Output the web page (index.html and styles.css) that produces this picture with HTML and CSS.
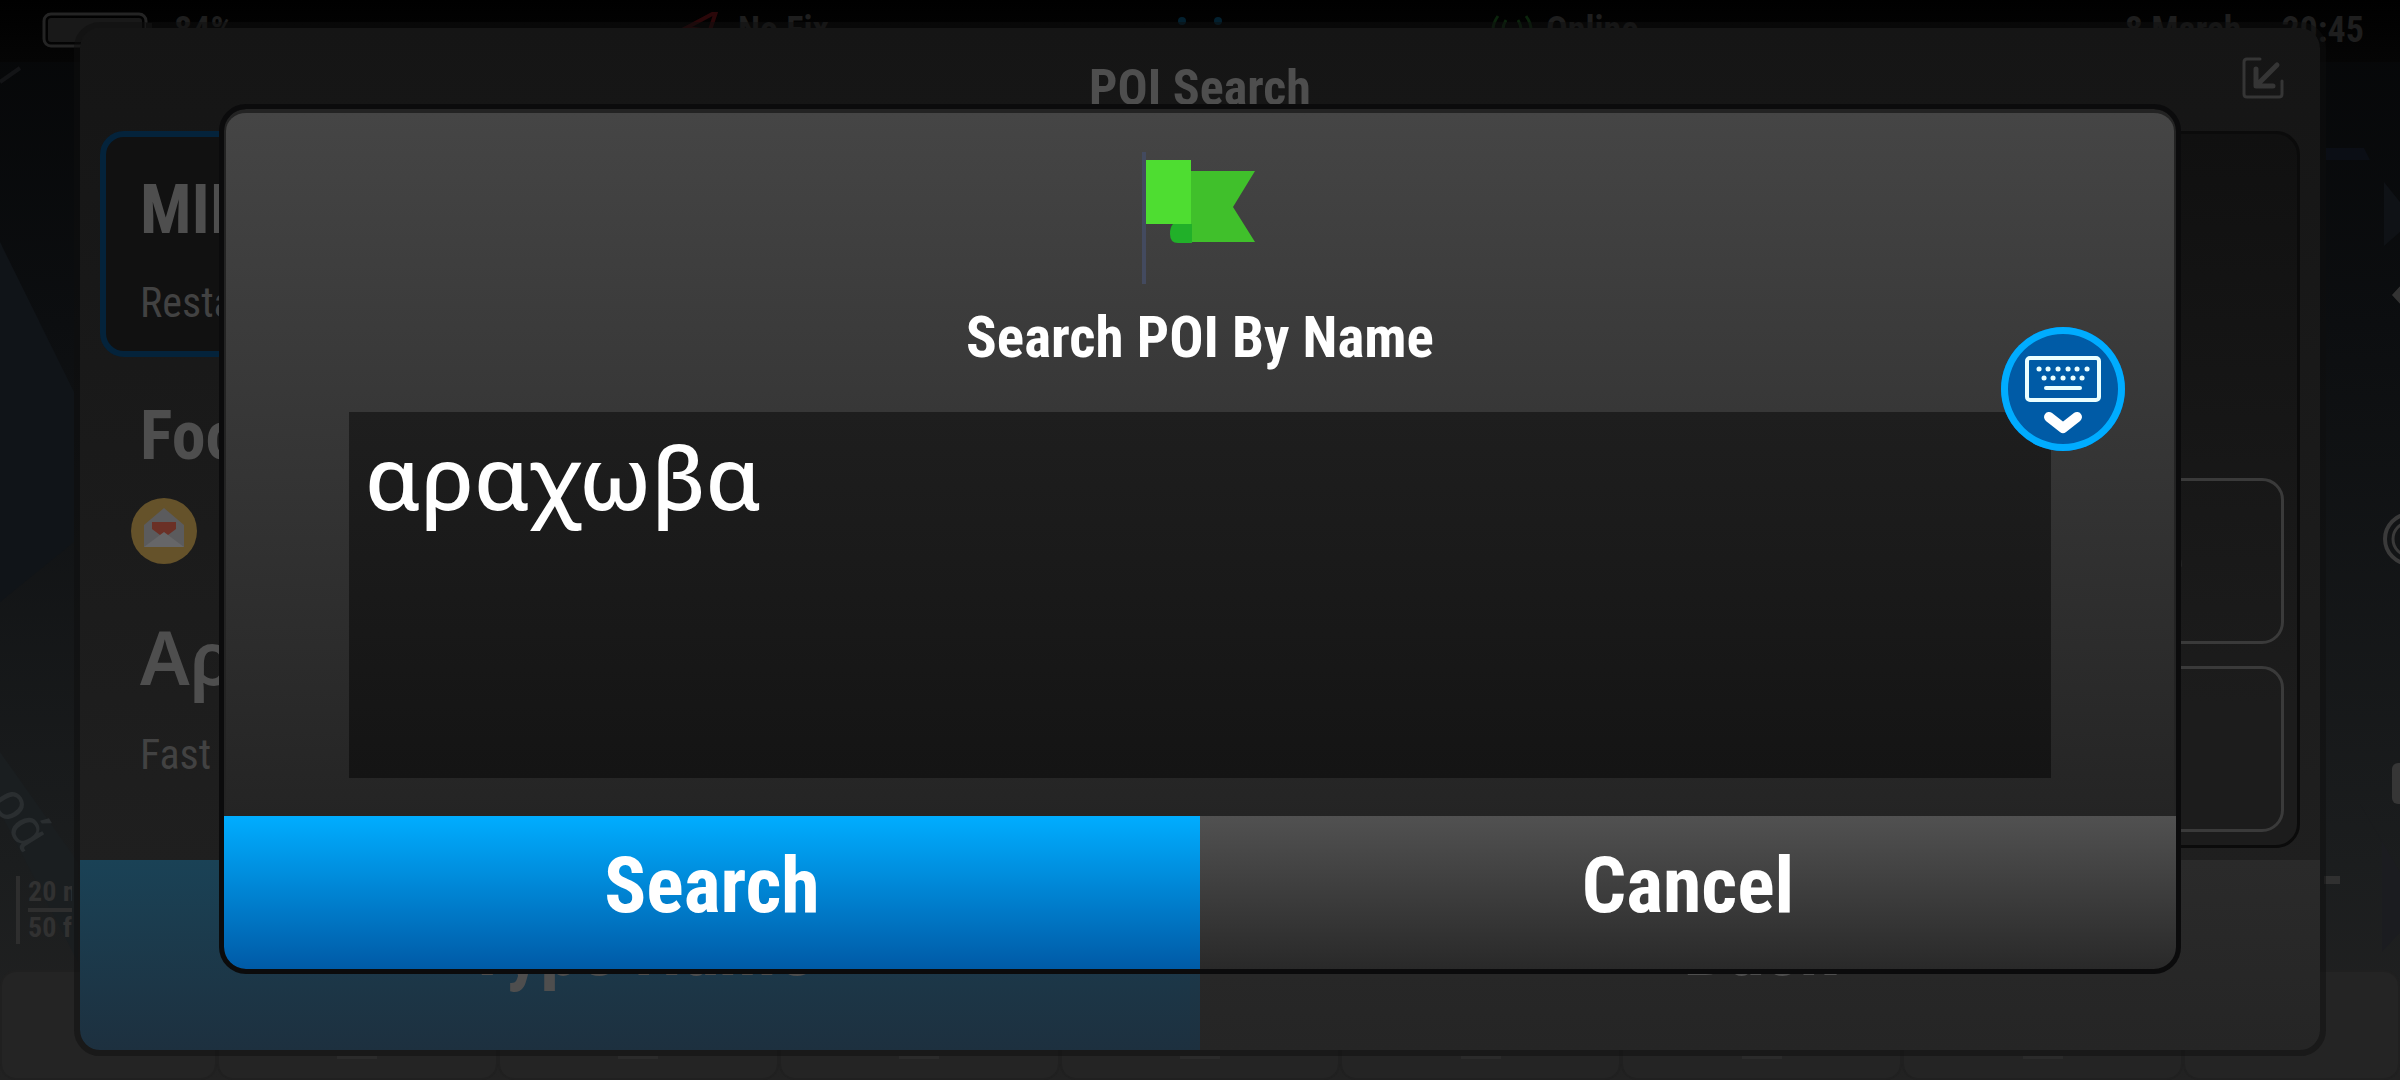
FILE: index.html
```
<!DOCTYPE html>
<html lang="en">
  <head>
    <meta charset="UTF-8" />
    <meta name="viewport" content="width=device-width, initial-scale=1.0" />
    <title>POI Search</title>
    <link rel="stylesheet" href="styles.css">
  </head>
  <body>
    <!-- map screen behind the dialogs -->
    <div class="map">
      <header class="status">
        <div class="status-item">
          <svg class="battery" viewBox="0 0 112 36">
            <rect x="2" y="2" width="102" height="32" rx="7" fill="none" stroke="#242424" stroke-width="3" />
            <rect x="6" y="6" width="94" height="24" rx="3" fill="#191919" />
            <rect x="104" y="11" width="6" height="14" fill="#111" />
          </svg>
          <span>84%</span>
        </div>
        <div class="status-item">
          <svg class="status-icon" viewBox="0 0 44 36">
            <path d="M4 16 34 0 24 30 20 18Z" fill="none" stroke="#2a0709" stroke-width="4" />
          </svg>
          <span>No Fix</span>
        </div>
        <div class="status-item">
          <svg class="status-icon" viewBox="0 0 44 36">
            <circle cx="4" cy="9" r="4" fill="#03202f" />
            <circle cx="40" cy="9" r="4" fill="#03202f" />
          </svg>
        </div>
        <div class="status-item">
          <svg class="status-icon" viewBox="0 0 44 36">
            <path d="M8 4Q-2 18 8 30M16 8Q10 18 16 26M36 4Q46 18 36 30M28 8Q34 18 28 26" fill="none" stroke="#0b240c" stroke-width="3" />
          </svg>
          <span>Online</span>
        </div>
        <div class="status-item status-time">
          <span>8 March</span>
          <span>20:45</span>
        </div>
      </header>
      <svg class="terrain" viewBox="0 0 2400 900" preserveAspectRatio="none">
        <path d="M0 180 74 330V480L0 540Z" fill="#101418" />
        <path d="M0 690 78 800V900L0 750Z" fill="#1a1e20" />
        <path d="M0 20 20 6" stroke="#131416" stroke-width="4" />
        <path d="M2326 86h38l6 12h-44Z" fill="#0b0e15" />
        <path d="M2384 120 2400 140V170L2384 184Z" fill="#0f1216" />
        <path d="M2360 742 2400 810V870L2382 890V780Z" fill="#1b1c20" />
      </svg>
      <span class="street">ρά</span>
      <div class="scale">
        <span>20 m</span>
        <span>50 ft</span>
      </div>
      <div class="map-tools">
        <svg viewBox="0 0 76 640">
          <path d="M82 16 72 27 82 38" fill="none" stroke="#333" stroke-width="6" />
          <circle cx="86" cy="271" r="25" fill="none" stroke="#3a3a3a" stroke-width="4" />
          <circle cx="86" cy="271" r="17" fill="none" stroke="#3a3a3a" stroke-width="3" />
          <rect x="68" y="495" width="20" height="41" rx="6" fill="#363636" />
          <rect x="0" y="608" width="16" height="8" fill="#303030" />
        </svg>
      </div>
      <nav class="dock">
        <span></span><span></span><span></span><span></span><span></span><span></span><span></span><span></span><span></span>
      </nav>
    </div>

    <!-- search results -->
    <section class="results">
      <header class="results-head">
        <h1>POI Search</h1>
        <button type="button" class="shrink" aria-label="Minimise">
          <svg viewBox="0 0 42 42">
            <path d="M18 2H5Q2 2 2 5V37Q2 40 5 40H37Q40 40 40 37V24" fill="none" stroke="#353535" stroke-width="3" stroke-linecap="round" />
            <path d="M35 8 15 28M14 12V29H31" fill="none" stroke="#353535" stroke-width="5" stroke-linecap="round" stroke-linejoin="round" />
          </svg>
        </button>
      </header>
      <div class="results-body">
        <ul class="list">
          <li class="card selected">
            <h2>MIL</h2>
            <p>Restaurant</p>
          </li>
          <li class="card">
            <h2>Foo</h2>
            <svg class="mail" viewBox="0 0 66 66">
              <circle cx="33" cy="33" r="33" fill="#65522a" />
              <path d="M13 27 33 10 53 27V49H13Z" fill="#5b5b5d" />
              <path d="M21 24H45V31L33 40 21 31Z" fill="#6b3026" />
              <path d="M13 49 33 34 53 49Z" fill="#666668" />
            </svg>
          </li>
          <li class="card">
            <h2 class="greek">Αρ</h2>
            <p>Fast Food</p>
          </li>
        </ul>
        <div class="side">
          <button type="button">e</button>
          <button type="button" aria-label="Details"></button>
        </div>
      </div>
      <footer class="actions">
        <button type="button" class="primary">Type Name</button>
        <button type="button">Back</button>
      </footer>
    </section>

    <!-- name prompt -->
    <form class="prompt">
      <div class="prompt-body">
        <svg class="flag" viewBox="0 0 128 132">
          <rect x="6" y="0" width="4" height="132" fill="#434a5f" />
          <path d="M55 19H119L97 55 119 90H55Z" fill="#40c02b" />
          <path d="M37 72H56V91H42Q34 91 34 82Q34 75 37 72Z" fill="#21b029" />
          <rect x="10" y="8" width="45" height="64" fill="#4edd31" />
        </svg>
        <label for="txtName">Search POI By Name</label>
        <div class="field">
          <textarea id="txtName" name="txtName" spellcheck="false">αραχωβα</textarea>
          <button type="button" class="keyboard" aria-label="Hide keyboard">
            <svg viewBox="0 0 124 124">
              <rect x="26" y="31" width="72" height="42" rx="3" fill="none" stroke="#eaffff" stroke-width="4" />
              <path d="M38 42h.1M47 42h.1M57 42h.1M67 42h.1M76 42h.1M86 42h.1M43 51h.1M52 51h.1M62 51h.1M72 51h.1M81 51h.1" stroke="#eaffff" stroke-width="5" stroke-linecap="round" />
              <path d="M45 61H79" stroke="#eaffff" stroke-width="4" stroke-linecap="round" />
              <path d="M48 90 62 101 76 90" fill="none" stroke="#fff" stroke-width="10" stroke-linecap="round" stroke-linejoin="round" />
            </svg>
          </button>
        </div>
      </div>
      <div class="actions">
        <button type="submit" class="primary">Search</button>
        <button type="button">Cancel</button>
      </div>
    </form>
  </body>
</html>
```
FILE: styles.css
```
* {
  box-sizing: border-box;
}
body {
  margin: 0;
  height: 100vh;
  overflow: hidden;
  position: relative;
  background: #0a0b0d;
  font-family: "Roboto Condensed", "Roboto", "Liberation Sans", sans-serif;
}
h1,
h2,
p,
ul {
  margin: 0;
  padding: 0;
  font-weight: bold;
  list-style: none;
}
button {
  margin: 0;
  padding: 0;
  border: none;
  background: none;
  color: inherit;
  font: inherit;
}
svg {
  display: block;
}

/* map */
.map {
  height: 100%;
  display: flex;
  flex-direction: column;
  justify-content: space-between;
  background: linear-gradient(#050607, #0c0e10 30%, #1b1d1e 80%, #222);
}
.status {
  height: 62px;
  padding: 12px 36px 14px 42px;
  display: grid;
  grid-template-columns: 640fr 496fr 312fr 600fr 274fr;
  background: linear-gradient(#000, #050505);
  color: #1e1e1e;
  font-size: 36px;
  font-weight: bold;
  line-height: 36px;
}
.status-item {
  display: flex;
  gap: 12px;
}
.status-time {
  justify-content: flex-end;
  gap: 40px;
}
.battery {
  width: 112px;
  height: 36px;
  margin-right: 8px;
}
.status-icon {
  width: 44px;
  height: 36px;
}
.terrain {
  position: absolute;
  top: 62px;
  width: 100%;
  height: 900px;
}
.street {
  position: absolute;
  left: -8px;
  top: 780px;
  color: #2a2e30;
  font-family: "Noto Sans", sans-serif;
  font-size: 52px;
  transform: rotate(58deg);
}
.scale {
  position: absolute;
  left: 16px;
  top: 876px;
  width: 56px;
  overflow: hidden;
  border-left: 4px solid #2e2e2e;
  padding-left: 8px;
  color: #313131;
  font-size: 28px;
  font-weight: bold;
  line-height: 32px;
  white-space: nowrap;
}
.scale span {
  display: block;
}
.scale span + span {
  border-top: 4px solid #2e2e2e;
}
.map-tools {
  position: absolute;
  right: 0;
  top: 268px;
  width: 76px;
}
.dock {
  height: 110px;
  display: grid;
  grid-template-columns: 217fr repeat(7, 281fr) 217fr;
}
.dock span {
  padding-top: 84px;
  border: 2px solid #202020;
  border-radius: 16px;
  background: #242424;
}
.dock span::before {
  content: "";
  display: block;
  width: 40px;
  height: 3px;
  margin: 0 auto;
  background: #2b2b2b;
}
.dock span:first-child::before,
.dock span:last-child::before {
  display: none;
}

/* results dialog */
.results {
  position: absolute;
  top: 28px;
  left: 80px;
  right: 80px;
  bottom: 30px;
  display: flex;
  flex-direction: column;
  border-radius: 20px;
  overflow: hidden;
  outline: 6px solid rgba(14, 14, 14, 0.5);
  background: linear-gradient(#151515, #1f1f1f 82%);
  color: #4e4e4e;
}
.results-head {
  height: 103px;
  padding: 29px 36px 0;
  display: grid;
  grid-template-columns: 42px 1fr 42px;
}
.results-head h1 {
  grid-column: 2;
  text-align: center;
  font-size: 50px;
  line-height: 62px;
}
.shrink {
  height: 42px;
}
.results-body {
  flex: 1;
  min-height: 0;
  padding: 0 20px 12px;
  display: grid;
  grid-template-columns: 1fr 1fr;
}
.list {
  min-height: 0;
  overflow: hidden;
}
.card {
  height: 226px;
  padding: 36px 34px 30px;
  border: 6px solid transparent;
  border-radius: 24px;
}
.card.selected {
  border-color: #04233b;
  background: #111;
}
.card h2 {
  font-size: 68px;
  line-height: 74px;
}
.card .greek {
  font-family: "Noto Sans", sans-serif;
  font-size: 74px;
  font-weight: 600;
  line-height: 64px;
}
.card p {
  margin-top: 32px;
  color: #424242;
  font-size: 42px;
  font-weight: normal;
  line-height: 48px;
}
.card .greek + p {
  margin-top: 42px;
}
.mail {
  width: 66px;
  height: 66px;
  margin: 25px 0 0 -9px;
}
.side {
  padding: 13px;
  display: flex;
  flex-direction: column;
  justify-content: flex-end;
  gap: 22px;
  border: 3px solid #0b0b0b;
  border-radius: 24px;
  background: linear-gradient(#101010, #1c1c1c 80%);
}
.side button {
  height: 166px;
  padding-right: 98px;
  border: 3px solid #3a3a3a;
  border-radius: 22px;
  text-align: right;
  color: #2c2c2c;
  font-size: 50px;
  font-weight: bold;
}

/* button row shared by both dialogs */
.actions {
  display: grid;
  grid-template-columns: 1fr 1fr;
  font-size: 78px;
  font-weight: bold;
}
.actions button {
  padding-bottom: 14px;
}
.results .actions {
  height: 190px;
}
.results .actions button {
  background: linear-gradient(#2a2a2a, #252525);
}
.results .actions .primary {
  background: linear-gradient(#1a4256, #1d303f);
}

/* prompt dialog */
.prompt {
  position: absolute;
  top: 109px;
  left: 224px;
  right: 224px;
  bottom: 111px;
  display: flex;
  flex-direction: column;
  border-radius: 22px;
  overflow: hidden;
  outline: 5px solid #0b0b0c;
  color: #fff;
}
.prompt-body {
  flex: 1;
  min-height: 0;
  padding: 39px 123px 38px;
  display: flex;
  flex-direction: column;
  align-items: center;
  border: 2px solid #232323;
  border-top-width: 4px;
  border-bottom: none;
  border-radius: 22px 22px 0 0;
  background: linear-gradient(#454545, #242424);
}
.flag {
  width: 128px;
  height: 132px;
}
.prompt label {
  margin-top: 20px;
  font-size: 57px;
  font-weight: bold;
  line-height: 68px;
}
.field {
  flex: 1;
  align-self: stretch;
  margin-top: 40px;
  position: relative;
}
.field textarea {
  display: block;
  width: 100%;
  height: 100%;
  padding: 0 16px;
  border: none;
  outline: none;
  resize: none;
  background: linear-gradient(#1e1e1e, #141414);
  color: #fff;
  font-family: "Noto Sans", sans-serif;
  font-size: 88px;
  font-weight: 500;
  line-height: 128px;
}
.keyboard {
  position: absolute;
  top: -85px;
  right: -74px;
  width: 124px;
  height: 124px;
  border-radius: 50%;
  background: #005ba6;
  box-shadow: inset 0 0 0 7px #00acff;
}
.prompt .actions {
  height: 153px;
}
.prompt .actions button {
  background: linear-gradient(#515151, #292929);
}
.prompt .actions .primary {
  background: linear-gradient(#00adff, #005aa6);
}
```
